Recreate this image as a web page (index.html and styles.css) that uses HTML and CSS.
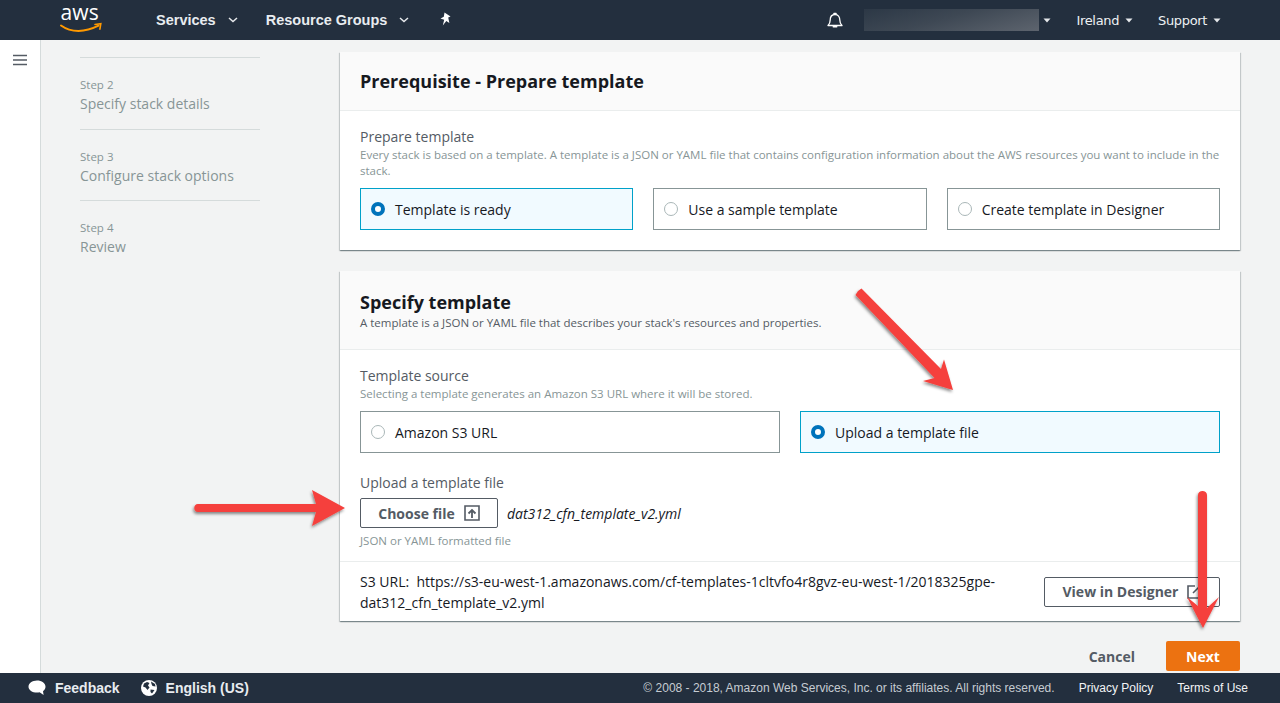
FILE: index.html
```html
<!DOCTYPE html>
<html lang="en">
<head>
<meta charset="utf-8">
<title>Create stack</title>
<link rel="stylesheet" href="styles.css">
</head>
<body>
<header class="topbar">
  <svg class="logo" width="42" height="32" viewBox="0 0 42 32">
    <text x="0.5" y="17" class="logo-text">aws</text>
    <path d="M1 22.5c5 3.6 11 5.4 17.5 5.4 6.500 0 13-1.700 20-5.200" fill="none" stroke="#f90" stroke-width="2" stroke-linecap="round"/>
    <path d="M35 21.500l5.800-.8-.9 5.500" fill="none" stroke="#f90" stroke-width="1.600" stroke-linecap="round"/>
  </svg>
  <nav class="nav-left">
    <span class="nav-item nav-services">Services<svg class="chev" width="10" height="6" viewBox="0 0 10 6"><path d="M1 1l4 3.500L9 1" fill="none" stroke="#e6e9ec" stroke-width="1.500"/></svg></span>
    <span class="nav-item nav-groups">Resource Groups<svg class="chev" width="10" height="6" viewBox="0 0 10 6"><path d="M1 1l4 3.500L9 1" fill="none" stroke="#e6e9ec" stroke-width="1.500"/></svg></span>
    <svg class="pin" width="14" height="14" viewBox="0 0 14 14"><path d="M5.500 0.500L11.500 4.500 9.200 5.600 10.400 11 7.300 9 3.800 13.500 5.200 7.700 1.500 6.500 4.800 4.700z" fill="#fff"/></svg>
  </nav>
  <div class="nav-right">
    <svg class="bell" width="18" height="18" viewBox="0 0 18 18"><path d="M2 14.500c1.600-1.500 2.200-3 2.200-5.500 0-3 1.700-5.500 4.800-5.500s4.800 2.500 4.800 5.500c0 2.500.6 4 2.200 5.500z" fill="none" stroke="#fff" stroke-width="1.300" stroke-linejoin="round"/><path d="M8 2.500h2M7.300 15.800h3.400" stroke="#fff" stroke-width="1.600" stroke-linecap="round"/></svg>
    <div class="blurred"></div>
    <svg class="tri tri-account" width="8" height="5" viewBox="0 0 8 5"><path d="M0.500 0.500h7L4 4.500z" fill="#e6e9ec"/></svg>
    <span class="nav-plain nav-region">Ireland<svg class="tri" width="8" height="5" viewBox="0 0 8 5"><path d="M0.500 0.500h7L4 4.500z" fill="#e6e9ec"/></svg></span>
    <span class="nav-plain">Support<svg class="tri" width="8" height="5" viewBox="0 0 8 5"><path d="M0.500 0.500h7L4 4.500z" fill="#e6e9ec"/></svg></span>
  </div>
</header>

<div class="middle">
  <aside class="rail">
    <svg width="14" height="12" viewBox="0 0 14 12"><path d="M0 1.500h14M0 6h14M0 10.500h14" stroke="#545b64" stroke-width="1.700"/></svg>
  </aside>
  <ol class="steps">
    <li class="step"><small>Step 2</small><span>Specify stack details</span></li>
    <li class="step"><small>Step 3</small><span>Configure stack options</span></li>
    <li class="step"><small>Step 4</small><span>Review</span></li>
  </ol>
  <main class="content">
    <section class="panel">
      <div class="panel-head panel-head-short"><h2>Prerequisite - Prepare template</h2></div>
      <div class="panel-body">
        <div class="label">Prepare template</div>
        <p class="hint hint-wide">Every stack is based on a template. A template is a JSON or YAML file that contains configuration information about the AWS resources you want to include in the stack.</p>
        <div class="tiles tiles-3">
          <div class="tile selected"><i class="radio on"></i>Template is ready</div>
          <div class="tile"><i class="radio"></i>Use a sample template</div>
          <div class="tile"><i class="radio"></i>Create template in Designer</div>
        </div>
      </div>
    </section>

    <section class="panel">
      <div class="panel-head panel-head-tall">
        <h2>Specify template</h2>
        <p class="desc">A template is a JSON or YAML file that describes your stack's resources and properties.</p>
      </div>
      <div class="panel-body panel-body-second">
        <div class="label">Template source</div>
        <p class="hint">Selecting a template generates an Amazon S3 URL where it will be stored.</p>
        <div class="tiles tiles-2">
          <div class="tile"><i class="radio"></i>Amazon S3 URL</div>
          <div class="tile selected"><i class="radio on"></i>Upload a template file</div>
        </div>
        <div class="label label-upload">Upload a template file</div>
        <div class="file-row">
          <span class="btn btn-choose">Choose file<svg width="16" height="16" viewBox="0 0 16 16"><path d="M1 1h14v14H1z" fill="none" stroke="#545b64" stroke-width="1.600"/><path d="M8 13V5M4.500 8.500L8 5l3.500 3.500" fill="none" stroke="#545b64" stroke-width="1.800"/></svg></span>
          <em>dat312_cfn_template_v2.yml</em>
        </div>
        <p class="hint hint-file">JSON or YAML formatted file</p>
      </div>
      <div class="panel-foot">
        <div class="s3-url">S3 URL:&nbsp; https://s3-eu-west-1.amazonaws.com/cf-templates-1cltvfo4r8gvz-eu-west-1/2018325gpe-dat312_cfn_template_v2.yml</div>
        <span class="btn btn-designer">View in Designer<svg width="14" height="14" viewBox="0 0 14 14"><path d="M8 1H1v12h12V7" fill="none" stroke="#545b64" stroke-width="1.600"/><path d="M6 8l7-7" stroke="#545b64" stroke-width="1.600"/></svg></span>
      </div>
    </section>

    <div class="actions">
      <span class="cancel">Cancel</span>
      <span class="next">Next</span>
    </div>
  </main>
</div>

<footer class="footer">
  <svg class="foot-icon" width="18" height="16" viewBox="0 0 18 16"><path d="M9 0.500c4.700 0 8.500 2.700 8.500 6.200 0 1.900-1 3.400-2.500 4.500l.6 3.800-4-2.700c-.8.200-1.700.3-2.600.3C4.300 12.600.5 10 .5 6.700S4.300.5 9 .5z" fill="#fff"/></svg>
  <span class="foot-strong foot-feedback">Feedback</span>
  <svg class="foot-icon" width="16" height="16" viewBox="0 0 16 16"><circle cx="8" cy="8" r="8" fill="#fff"/><path d="M3 3.500l3-1.500 2.500 1L7 5.500 8.500 7.500 6.500 10 4.500 7.500 2 6.500zM10 1.500l4 2.500.5 2.500-3-.5-1-2zM9.500 9.500l4 .5-2.500 3.500-1.500-1.500z" fill="#232f3e"/></svg>
  <span class="foot-strong">English (US)</span>
  <span class="foot-copy">© 2008 - 2018, Amazon Web Services, Inc. or its affiliates. All rights reserved.</span>
  <span class="foot-link foot-privacy">Privacy Policy</span>
  <span class="foot-link">Terms of Use</span>
</footer>

<svg class="arrows" width="1280" height="703" viewBox="0 0 1280 703">
  <defs>
    <filter id="arrow-shadow" x="-30%" y="-30%" width="160%" height="160%">
      <feDropShadow dx="-1" dy="2" stdDeviation="1.500" flood-color="#000" flood-opacity=".45"/>
    </filter>
  </defs>
  <g filter="url(#arrow-shadow)" fill="#f5403c">
    <path d="M858 291l3.500-2.500L941 369l3-9.500 9 30.500-30-9 11.500-3L855.500 295z"/>
    <path d="M198 504H316l-4-14 33 18-33 18 4-14H198c-5 0-5-8 0-8z"/>
    <path d="M1198 495c0-5.500 9-5.500 9 0V608l12-11-16 31-16-31 11 9z"/>
  </g>
</svg>
</body>
</html>
```
FILE: styles.css
```css
* { box-sizing: border-box; }
html, body { margin: 0; height: 703px; overflow: hidden; }
body {
  display: flex;
  flex-direction: column;
  position: relative;
  background: #f2f3f3;
  font-family: "Open Sans", "Noto Sans", sans-serif;
  color: #16191f;
  font-size: 14px;
}

/* top bar */
.topbar {
  height: 40px;
  flex: none;
  background: #232f3e;
  display: flex;
  align-items: center;
  padding-left: 60px;
  color: #fff;
}
.logo { flex: none; margin-top: -2px; }
.logo-text { font: 21px "Open Sans", sans-serif; fill: #fff; letter-spacing: .2px; }
.nav-left { display: flex; align-items: center; margin-left: 54px; }
.nav-item {
  font: bold 14.500px "Liberation Sans", sans-serif;
  color: #e8ecf0;
  display: flex;
  align-items: center;
}
.chev { margin-left: 12px; }
.nav-services { margin-right: 28px; }
.nav-groups { margin-right: 30px; }
.pin { margin-top: -3px; }
.nav-right { margin-left: auto; display: flex; align-items: center; padding-right: 59px; }
.bell { margin-right: 20px; }
.blurred {
  width: 175px;
  height: 22px;
  background: linear-gradient(165deg, #2c3846 0%, #3e4854 45%, #5d646e 100%);
}
.tri { margin-left: 6px; }
.tri-account { margin-left: 4px; margin-right: 26px; }
.nav-plain { font: 13px "DejaVu Sans", sans-serif; color: #eef1f4; letter-spacing: -.35px; display: flex; align-items: center; }
.nav-region { margin-right: 25px; }

/* middle */
.middle { flex: 1; display: flex; min-height: 0; }
.rail {
  width: 41px;
  flex: none;
  background: #fff;
  border-right: 1px solid #d5dbdb;
  padding: 14px 0 0 13px;
}
.rail svg { display: block; }
.steps { width: 180px; margin: 17px 0 0 39px; padding: 0; list-style: none; flex: none; }
.step {
  border-top: 1px solid #d5dbdb;
  height: 71.500px;
  padding-top: 19px;
  display: flex;
  flex-direction: column;
  color: #879596;
}
.step small { font-size: 11.500px; line-height: 16px; }
.step span { font-size: 14px; line-height: 21px; font-weight: 500; }

.content { width: 900px; margin-left: 80px; padding-top: 12px; flex: none; }
.panel {
  background: #fff;
  box-shadow: 0 1px 1px 0 rgba(0,28,36,.3), 1px 1px 1px 0 rgba(0,28,36,.15), -1px 1px 1px 0 rgba(0,28,36,.15);
  margin-bottom: 21px;
}
.panel-head { background: #fafafa; border-bottom: 1px solid #eaeded; padding: 0 20px; }
.panel-head-short { height: 59px; padding-top: 17px; }
.panel-head-tall { height: 79px; padding-top: 19px; }
h2 { margin: 0; font-size: 18px; line-height: 24px; font-weight: 700; color: #16191f; }
.desc { margin: 0; font-size: 11.500px; line-height: 18px; color: #545b64; }
.panel-body { padding: 16px 20px 20px; }
.panel-body-second { padding-bottom: 12px; }
.label { font-size: 14px; line-height: 20px; color: #545b64; }
.hint { margin: 0; font-size: 11.500px; line-height: 16px; color: #879596; }
.tiles { display: grid; gap: 20px; margin-top: 9px; }
.tiles-3 { grid-template-columns: repeat(3, 1fr); }
.tiles-2 { grid-template-columns: repeat(2, 1fr); }
.tile {
  height: 42px;
  border: 1px solid #879596;
  display: flex;
  align-items: center;
  padding-left: 10px;
  font-size: 14px;
  color: #16191f;
}
.tile.selected { border-color: #00a1c9; background: #f1faff; }
.radio {
  width: 14px;
  height: 14px;
  border-radius: 50%;
  border: 1px solid #aab7b8;
  margin-right: 10px;
  flex: none;
  background: #fff;
}
.radio.on { border: 4px solid #0073bb; }
.label-upload { margin-top: 20px; }
.file-row { display: flex; align-items: center; margin-top: 5px; }
.btn {
  display: inline-flex;
  align-items: center;
  justify-content: center;
  height: 30px;
  border: 1px solid #545b64;
  border-radius: 2px;
  background: #fff;
  font-size: 14px;
  font-weight: 700;
  color: #545b64;
}
.btn svg { margin-left: 9px; }
.btn-choose { width: 138px; }
.file-row em { margin-left: 9px; font-size: 14px; color: #16191f; }
.hint-file { margin-top: 5px; }
.panel-foot {
  border-top: 1px solid #eaeded;
  height: 60px;
  padding: 0 20px;
  display: flex;
  align-items: center;
  justify-content: space-between;
}
.s3-url { width: 660px; font-size: 14px; line-height: 21px; color: #16191f; overflow-wrap: anywhere; }
.btn-designer { width: 176px; }
.actions { display: flex; justify-content: flex-end; align-items: center; margin-top: -1px; }
.cancel { font-size: 14px; font-weight: 700; color: #545b64; margin-right: 31px; }
.next {
  width: 74px;
  height: 30px;
  background: #ec7211;
  border-radius: 2px;
  color: #fff;
  font-size: 14px;
  font-weight: 700;
  display: flex;
  align-items: center;
  justify-content: center;
}

/* footer */
.footer {
  height: 30px;
  flex: none;
  background: #232f3e;
  display: flex;
  align-items: center;
  padding: 0 32px 0 28px;
  font-family: "Liberation Sans", sans-serif;
  color: #e8ecf0;
}
.foot-icon { flex: none; }
.foot-strong { font-weight: bold; font-size: 14px; margin-left: 9px; }
.foot-feedback { margin-right: 21px; }
.foot-copy { margin-left: auto; font-size: 12px; color: #c6ccd2; }
.foot-link { font-size: 12px; color: #f2f4f6; }
.foot-privacy { margin: 0 24px; }

.arrows { position: absolute; left: 0; top: 0; pointer-events: none; }
```
